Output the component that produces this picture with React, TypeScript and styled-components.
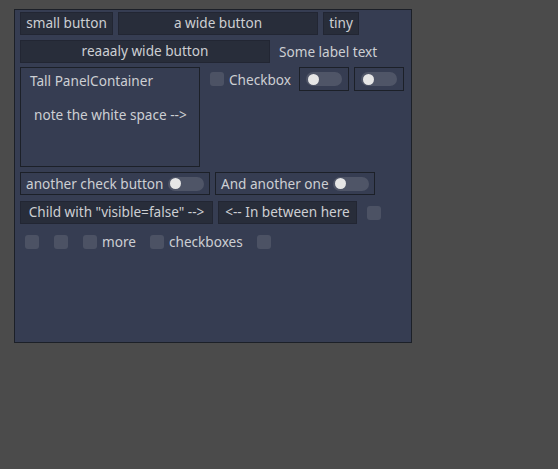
import React from "react";
import styled, { createGlobalStyle } from "styled-components";

const Global = createGlobalStyle`
  html, body { margin: 0; padding: 0; background: #4b4b4b; }
  body { font-family: "Noto Sans", "DejaVu Sans", sans-serif; font-size: 13.6px; color: #cdcfd3; }
`;

const Panel = styled.div`
  margin: 9px 0 0 14px;
  width: 398px;
  height: 334px;
  box-sizing: border-box;
  background: #363d52;
  border: 1px solid #1c2028;
  padding: 2px 5px;
  display: flex;
  flex-direction: column;
  gap: 5px;
`;

const Row = styled.div<{ $h?: number; $gap?: number; $mt?: number }>`
  display: flex;
  align-items: flex-start;
  gap: ${(p) => p.$gap ?? 5}px;
  height: ${(p) => p.$h ?? 23}px;
  margin-top: ${(p) => p.$mt ?? 0}px;
`;

const Button = styled.div<{ $w?: number }>`
  box-sizing: border-box;
  height: 23px;
  ${(p) => (p.$w ? `width: ${p.$w}px;` : "")}
  padding: 0 6px 1px;
  background: #282d3a;
  border: 1px solid #222633;
  display: flex;
  align-items: center;
  justify-content: center;
  white-space: nowrap;
  line-height: 1;
  flex: none;
`;

const Label = styled.div<{ $pl?: number; $mt?: number }>`
  height: 23px;
  display: flex;
  align-items: center;
  padding-left: ${(p) => p.$pl ?? 0}px;
  margin-top: ${(p) => p.$mt ?? 0}px;
  white-space: nowrap;
`;

const Outline = styled.div<{ $w: number; $h?: number; $center?: boolean }>`
  box-sizing: border-box;
  width: ${(p) => p.$w}px;
  height: ${(p) => p.$h ?? 23}px;
  border: 1px solid #1c2028;
  display: flex;
  align-items: center;
  justify-content: ${(p) => (p.$center ? "center" : "space-between")};
  padding: 0 5px;
  white-space: nowrap;
  flex: none;
`;

const TallPanel = styled.div`
  box-sizing: border-box;
  width: 180px;
  height: 100px;
  border: 1px solid #1c2028;
  padding: 1px 9px;
  display: flex;
  flex-direction: column;
  flex: none;
`;

const Box = styled.div`
  width: 14px;
  height: 14px;
  border-radius: 3px;
  background: #4c5264;
  flex: none;
`;

const CheckItem = styled.div<{ $w?: number; $pl?: number }>`
  display: flex;
  align-items: center;
  gap: 5px;
  height: 23px;
  padding-left: ${(p) => p.$pl ?? 0}px;
  ${(p) => (p.$w ? `width: ${p.$w}px;` : "")}
  box-sizing: border-box;
  white-space: nowrap;
  flex: none;
`;

const Track = styled.div`
  position: relative;
  width: 36px;
  height: 14px;
  border-radius: 7px;
  background: #4f5567;
  flex: none;
`;

const Knob = styled.div`
  position: absolute;
  left: 1.5px;
  top: 1.5px;
  width: 11px;
  height: 11px;
  border-radius: 50%;
  background: #e6e6e6;
`;

const Toggle = () => (
  <Track>
    <Knob />
  </Track>
);

const BoxRow = styled.div`
  display: flex;
  align-items: center;
  height: 23px;
  padding-left: 5px;
  margin-top: 1px;
`;

const Spacer = styled.div<{ $w: number }>`
  width: ${(p) => p.$w}px;
  flex: none;
`;

export default function App() {
  return (
    <>
      <Global />
      <Panel>
        <Row>
          <Button $w={93}>small button</Button>
          <Button $w={200}>a wide button</Button>
          <Button $w={36}>tiny</Button>
        </Row>
        <Row $gap={9}>
          <Button $w={250}>reaaaly wide button</Button>
          <Label>Some label text</Label>
        </Row>
        <Row $h={100} $mt={-1}>
          <TallPanel>
            <Label>Tall PanelContainer</Label>
            <Label $pl={4} $mt={11}>note the white space --&gt;</Label>
          </TallPanel>
          <CheckItem $w={89} $pl={5} style={{ height: 24 }}>
            <Box />
            <span>Checkbox</span>
          </CheckItem>
          <Outline $w={50} $h={24} $center>
            <Toggle />
          </Outline>
          <Outline $w={50} $h={24} $center>
            <Toggle />
          </Outline>
        </Row>
        <Row>
          <Outline $w={190}>
            <span>another check button</span>
            <Toggle />
          </Outline>
          <Outline $w={160}>
            <span>And another one</span>
            <Toggle />
          </Outline>
        </Row>
        <Row $mt={1}>
          <Button $w={193}>Child with "visible=false" --&gt;</Button>
          <Button $w={139}>&lt;-- In between here</Button>
          <CheckItem $pl={5}>
            <Box />
          </CheckItem>
        </Row>
        <BoxRow>
          <Box />
          <Spacer $w={15} />
          <Box />
          <Spacer $w={15} />
          <CheckItem>
            <Box />
            <span>more</span>
          </CheckItem>
          <Spacer $w={14} />
          <CheckItem>
            <Box />
            <span>checkboxes</span>
          </CheckItem>
          <Spacer $w={14} />
          <Box />
        </BoxRow>
      </Panel>
    </>
  );
}
